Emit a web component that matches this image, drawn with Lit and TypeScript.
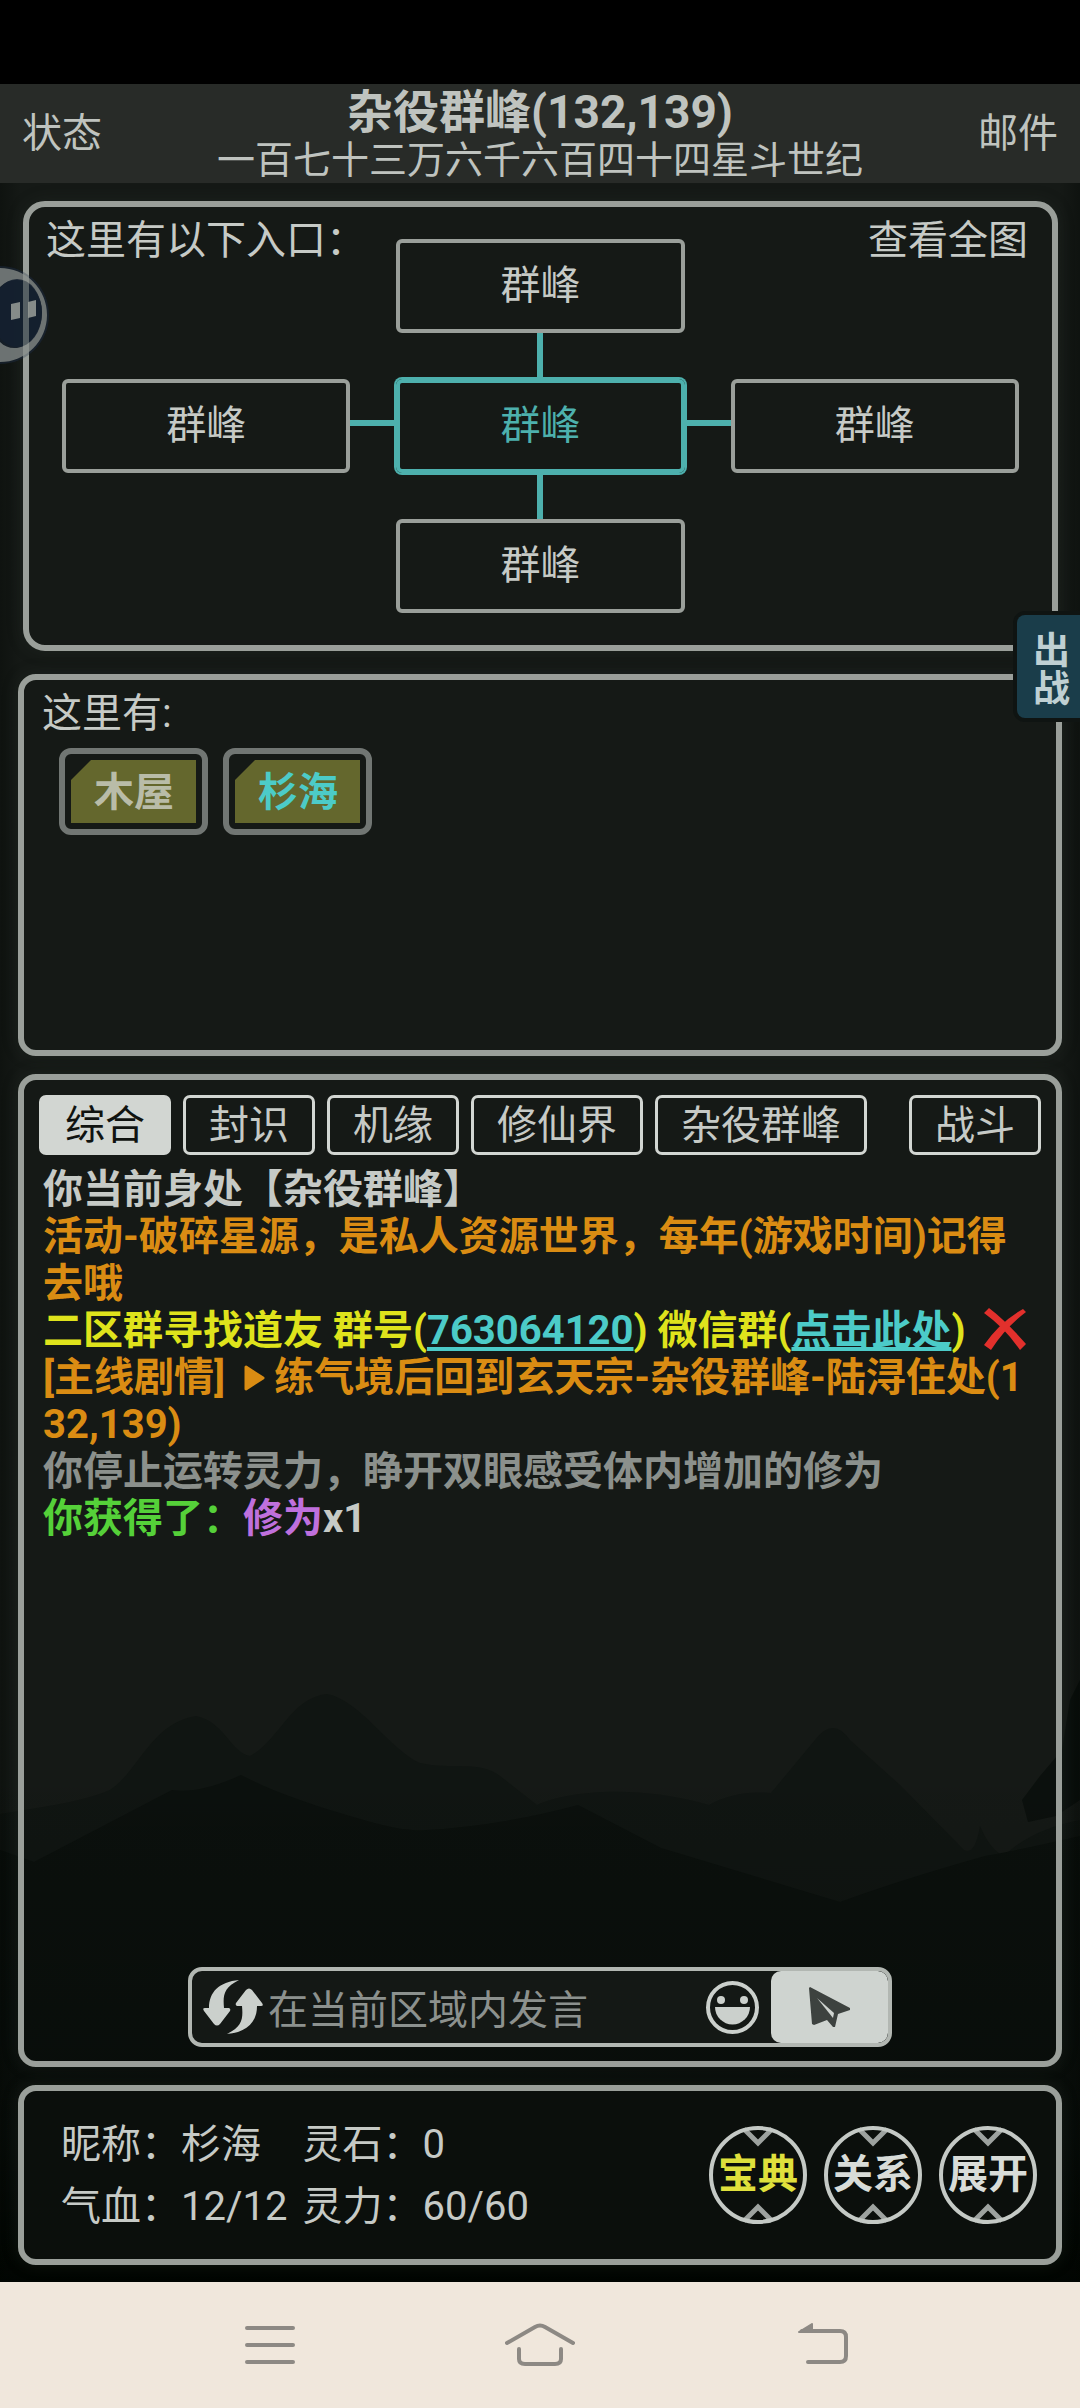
import { LitElement, html, css, svg } from "lit";
import { customElement, state } from "lit/decorators.js";

const chevrons = svg`
  <path d="M-14 -46 L0 -32 L14 -46" />
  <path d="M-14 46 L0 32 L14 46" />`;

@customElement("app-root")
export class AppRoot extends LitElement {
  @state() private channel = "综合";

  private channels = ["综合", "封识", "机缘", "修仙界", "杂役群峰", "战斗"];

  private stats = [
    { label: "昵称：", value: "杉海" },
    { label: "灵石：", value: "0" },
    { label: "气血：", value: "12/12" },
    { label: "灵力：", value: "60/60" },
  ];

  private actions = [
    { name: "宝典", hot: true },
    { name: "关系", hot: false },
    { name: "展开", hot: false },
  ];

  static styles = css`
    :host {
      display: flex;
      flex-direction: column;
      min-height: 100vh;
      position: relative;
      overflow: hidden;
      background: #151916;
      color: #c6cac6;
      font-family: Roboto, "Noto Sans CJK SC", sans-serif;
      font-size: 40px;
      line-height: 40px;
    }
    * {
      box-sizing: border-box;
    }
    button,
    input {
      font: inherit;
      color: inherit;
      background: none;
      border: 0;
      margin: 0;
      padding: 0;
    }
    svg {
      display: block;
    }
    h1,
    h2,
    p,
    dl,
    dt,
    dd {
      margin: 0;
      font: inherit;
    }

    .status-bar {
      height: 84px;
      background: #000;
    }
    .header {
      display: flex;
      align-items: center;
      justify-content: space-between;
      height: 99px;
      padding: 0 22px;
      background: #282b28;
      color: #bfc3bf;
    }
    .place {
      padding-top: 2px;
      text-align: center;
    }
    .place-name {
      font-size: 46px;
      font-weight: 700;
      line-height: 51px;
    }
    .era {
      font-size: 38px;
      line-height: 44px;
    }

    .main {
      position: relative;
      flex: 1;
      display: flex;
      flex-direction: column;
      gap: 18px;
      padding: 18px 18px 17px;
    }
    .scene {
      position: absolute;
      inset: 0;
      width: 100%;
      height: 100%;
    }
    .panel {
      position: relative;
      border: 6px solid #9a9f9a;
      border-radius: 18px;
      box-shadow: 0 0 16px rgba(48, 56, 50, 0.3);
    }

    .map {
      display: grid;
      margin: 0 4px 5px 5px;
      border-radius: 22px;
    }
    .map-head {
      grid-area: 1 / 1;
      align-self: start;
      display: flex;
      justify-content: space-between;
      padding: 14px 24px 0 17px;
    }
    .map-grid {
      grid-area: 1 / 1;
      display: grid;
      grid-template-columns: 1fr 46px 1fr 46px 1fr;
      grid-template-rows: 94px 46px 94px 46px 94px;
      padding: 32px 33px;
    }
    .node {
      border: 4px solid #9a9f9a;
      border-radius: 6px;
    }
    .node.here {
      border-color: #4db0ad;
      box-shadow: 0 0 0 2px #4db0ad;
      color: #4db0ad;
    }
    .north {
      grid-area: 1 / 3;
    }
    .west {
      grid-area: 3 / 1;
    }
    .here {
      grid-area: 3 / 3;
    }
    .east {
      grid-area: 3 / 5;
    }
    .south {
      grid-area: 5 / 3;
    }
    .road {
      background: #4db0ad;
    }
    .road-n,
    .road-s {
      width: 6px;
      justify-self: center;
    }
    .road-w,
    .road-e {
      height: 6px;
      align-self: center;
      margin-bottom: 6px;
    }
    .road-n {
      grid-area: 2 / 3;
    }
    .road-s {
      grid-area: 4 / 3;
    }
    .road-w {
      grid-area: 3 / 2;
    }
    .road-e {
      grid-area: 3 / 4;
    }

    .room {
      min-height: 382px;
      padding: 14px 18px;
    }
    .room-list {
      display: flex;
      gap: 15px;
      padding: 14px 17px 0;
    }
    .thing {
      padding: 6px;
      border: 6px solid #717673;
      border-radius: 12px;
      font-weight: 700;
    }
    .thing-face {
      display: block;
      padding: 13px 22px 10px 23px;
      background: #64672d;
      clip-path: polygon(20px 0, 100% 0, 100% 100%, 0 100%, 0 20px);
      color: #b9bca8;
    }
    .thing-face.self {
      color: #4ccbc8;
    }

    .log {
      flex: 1;
      display: flex;
      flex-direction: column;
      padding: 15px 15px 14px;
    }
    .tabs {
      display: flex;
      gap: 12px;
    }
    .tab {
      height: 60px;
      padding: 2px 23px 0;
      border: 3px solid #d2d6d2;
      border-radius: 7px;
    }
    .tab:last-child {
      margin-left: auto;
    }
    .tab.on {
      background: #d2d6d2;
      color: #101310;
    }
    .lines {
      flex: 1;
      padding: 11px 6px 0 4px;
      font-weight: 700;
      line-height: 47px;
      word-break: break-all;
    }
    .gold {
      color: #da8c13;
    }
    .yellow {
      color: #dfe31c;
    }
    .dim {
      color: #8b908c;
    }
    .green {
      color: #55d139;
    }
    .purple {
      color: #bf70dd;
    }
    .link {
      color: #4ccbc8;
      text-decoration: underline;
      text-decoration-thickness: 4px;
      text-underline-offset: 3px;
      text-decoration-skip-ink: none;
    }
    .inline-icon {
      display: inline-block;
    }
    .cross {
      margin-left: 9px;
      vertical-align: -6px;
    }
    .play {
      margin: 0 9px 0 19px;
    }

    .chat {
      display: flex;
      align-items: center;
      width: 100%;
      max-width: 704px;
      height: 80px;
      margin: 0 auto;
      border: 4px solid #b2b7b2;
      border-radius: 14px;
      background: #141815;
      overflow: hidden;
    }
    .refresh {
      padding: 0 5px 0 11px;
    }
    .say {
      flex: 1;
      min-width: 0;
      padding-top: 6px;
      outline: 0;
    }
    .say::placeholder {
      color: #8c918e;
      opacity: 1;
    }
    .emoji {
      padding-right: 12px;
    }
    .send {
      align-self: stretch;
      display: grid;
      place-items: center;
      width: 117px;
      border-radius: 10px;
      background: #cfd4d0;
    }

    .me {
      display: flex;
      align-items: center;
      justify-content: space-between;
      gap: 24px;
      min-height: 180px;
      padding: 0 18px 0 37px;
      background: #0b0f0c;
    }
    .stats {
      display: grid;
      grid-template-columns: auto auto;
      gap: 22px 15px;
      padding-top: 2px;
    }
    .stat {
      display: flex;
    }
    .actions {
      display: flex;
      gap: 15px;
    }
    .action {
      display: grid;
      place-items: center;
      width: 100px;
      height: 100px;
      color: #d8dcd8;
      font-weight: 700;
    }
    .action > * {
      grid-area: 1 / 1;
    }
    .action.hot {
      color: #dfe03c;
    }

    .nav {
      display: grid;
      grid-template-columns: 1fr 1fr 1fr;
      place-items: center;
      height: 126px;
      padding: 0 135px;
      background: #f0e7dc;
    }
    .nav-button {
      height: 44px;
    }

    .battle {
      position: absolute;
      top: 615px;
      right: 0;
      width: 63px;
      height: 103px;
      padding: 18px 10px 9px 16px;
      border-radius: 8px 0 0 8px;
      background: #1a3d4a;
      box-shadow: 0 0 0 4px #0f1412;
      color: #bfd0d3;
      font-size: 37px;
      font-weight: 700;
      line-height: 38px;
    }
    .pause {
      position: absolute;
      top: 264px;
      left: 0;
    }
  `;

  render() {
    return html`
      <div class="status-bar"></div>
      <header class="header">
        <button>状态</button>
        <div class="place">
          <h1 class="place-name">杂役群峰(132,139)</h1>
          <p class="era">一百七十三万六千六百四十四星斗世纪</p>
        </div>
        <button>邮件</button>
      </header>

      <main class="main">
        ${this.scene()}
        <section class="panel map">
          <div class="map-grid">
            <button class="node north">群峰</button>
            <span class="road road-n"></span>
            <button class="node west">群峰</button>
            <span class="road road-w"></span>
            <button class="node here">群峰</button>
            <span class="road road-e"></span>
            <button class="node east">群峰</button>
            <span class="road road-s"></span>
            <button class="node south">群峰</button>
          </div>
          <div class="map-head">
            <h2>这里有以下入口：</h2>
            <button>查看全图</button>
          </div>
        </section>

        <section class="panel room">
          <h2>这里有:</h2>
          <div class="room-list">
            <button class="thing"><span class="thing-face">木屋</span></button>
            <button class="thing"><span class="thing-face self">杉海</span></button>
          </div>
        </section>

        <section class="panel log">
          <nav class="tabs">
            ${this.channels.map(
              (name) => html`<button
                class="tab ${name === this.channel ? "on" : ""}"
                @click=${() => (this.channel = name)}
              >${name}</button>`
            )}
          </nav>
          <div class="lines">
            <p>你当前身处【杂役群峰】</p>
            <p class="gold">活动-破碎星源，是私人资源世界，每年(游戏时间)记得去哦</p>
            <p class="yellow">二区群寻找道友 群号(<a class="link" href="#group">763064120</a>) 微信群(<a class="link" href="#wechat">点击此处</a>) <svg
                class="inline-icon cross" width="42" height="42" viewBox="0 0 42 42" aria-hidden="true">
                <path d="M0 5 L5 0 Q22 13 42 36 L36 42 Q21 20 0 5Z" fill="#e2302c" />
                <path d="M39 1 L42 4 Q21 20 7 42 L0 37 Q16 14 39 1Z" fill="#e2302c" />
              </svg></p>
            <p class="gold">[主线剧情]<svg class="inline-icon play" width="21" height="26" viewBox="0 0 21 26" aria-hidden="true">
                <path d="M2 2 L19 13 L2 24Z" fill="#da8c13" stroke="#da8c13" stroke-width="3" stroke-linejoin="round" />
              </svg>练气境后回到玄天宗-杂役群峰-陆浔住处(132,139)</p>
            <p class="dim">你停止运转灵力，睁开双眼感受体内增加的修为</p>
            <p><span class="green">你获得了：</span><span class="purple">修为</span>x1</p>
          </div>
          <form class="chat" @submit=${(e: Event) => e.preventDefault()}>
            <button class="refresh" type="button" aria-label="刷新">
              <svg width="60" height="54" viewBox="0 0 60 54" fill="#cbd0cc">
                <path d="M36 0 C20 8 20 16 21 28 L26 28 Q28 29 27 31 L17 44 Q14 47 11 44 L1 31 Q-1 28 2 28 L6 28 C6 12 16 2 36 0Z" />
                <path d="M24 54 C40 46 40 38 39 26 L34 26 Q32 25 33 23 L43 10 Q46 7 49 10 L59 23 Q61 26 58 26 L54 26 C54 42 44 52 24 54Z" />
              </svg>
            </button>
            <input class="say" type="text" placeholder="在当前区域内发言" aria-label="在当前区域内发言" />
            <button class="emoji" type="button" aria-label="表情">
              <svg width="53" height="53" viewBox="0 0 53 53">
                <circle cx="26.500" cy="26.500" r="24.500" fill="none" stroke="#cbd0cc" stroke-width="4" />
                <circle cx="15" cy="19" r="4" fill="#cbd0cc" />
                <circle cx="38" cy="19" r="4" fill="#cbd0cc" />
                <path d="M9 26 H44 A17 17 0 0 1 9 26Z" fill="#cbd0cc" />
              </svg>
            </button>
            <button class="send" aria-label="发送">
              <svg width="42" height="42" viewBox="0 0 42 42">
                <path d="M1 1 L41 22 L41 24 L29 28 L26 41 L24 41 L18 34 L5 39 L3 38 L0 2Z" fill="#3d423f" />
                <path d="M8 12 L25 27 L24 32Z" fill="#cfd4d0" />
              </svg>
            </button>
          </form>
        </section>

        <section class="panel me">
          <dl class="stats">
            ${this.stats.map(
              (s) => html`<div class="stat"><dt>${s.label}</dt><dd>${s.value}</dd></div>`
            )}
          </dl>
          <div class="actions">
            ${this.actions.map(
              (a) => html`<button class="action ${a.hot ? "hot" : ""}">
                <svg width="100" height="100" viewBox="-50 -50 100 100" fill="none">
                  <g stroke="#9da29f" stroke-width="5">${chevrons}</g>
                  <circle r="47" stroke="#c4c9c5" stroke-width="4" />
                </svg>
                <span>${a.name}</span>
              </button>`
            )}
          </div>
        </section>
      </main>

      <nav class="nav">
        <button class="nav-button" aria-label="菜单">
          <svg width="50" height="44" viewBox="0 0 50 44" stroke="#8d8984" stroke-width="4" stroke-linecap="round">
            <path d="M2 5 H48 M2 22 H48 M2 39 H48" />
          </svg>
        </button>
        <button class="nav-button" aria-label="主页">
          <svg width="70" height="44" viewBox="0 0 70 44" fill="none" stroke="#8d8984" stroke-width="4" stroke-linecap="round">
            <path d="M2 20 L30 4 Q35 1 40 4 L68 20" />
            <path d="M14 26 V36 Q14 41 20 41 H50 Q56 41 56 36 V26" />
          </svg>
        </button>
        <button class="nav-button" aria-label="返回">
          <svg width="80" height="44" viewBox="0 0 80 44" fill="none" stroke="#8d8984" stroke-width="4" stroke-linecap="round">
            <path d="M32 8 H70 Q76 8 76 14 V33 Q76 39 70 39 H38" />
            <path d="M42 1 V9 H29Z" fill="#8d8984" stroke-width="2" stroke-linejoin="round" />
          </svg>
        </button>
      </nav>

      <button class="battle">出战</button>
      <button class="pause" aria-label="暂停">
        <svg width="52" height="102" viewBox="0 0 52 102">
          <circle cy="51" r="49" fill="#1b2a40" fill-opacity="0.5" />
          <path d="M0 4 A47 47 0 0 1 0 98 V78 C10 88 26 86 36 70 C44 56 44 40 36 28 C26 12 10 14 0 23Z"
            fill="#8a8f8b" fill-opacity="0.75" />
          <ellipse cx="17" cy="49" rx="25" ry="34" fill="#14202f" fill-opacity="0.85" />
          <path d="M11 40 L20 38 V54 L11 56Z M28 38 L36 36 V52 L28 54Z" fill="#858b89" />
          <path d="M23 6 H29 V94 H23Z" fill="#9a9f9a" fill-opacity="0.45" />
        </svg>
      </button>
    `;
  }

  /** Dusk landscape behind the panels. */
  private scene() {
    return html`<svg class="scene" viewBox="0 183 1080 2099" preserveAspectRatio="none" aria-hidden="true">
      <defs>
        <linearGradient id="dusk" x1="0" y1="0" x2="0" y2="1">
          <stop offset="0" stop-color="#000400" stop-opacity="0" />
          <stop offset="0.75" stop-color="#000400" stop-opacity="0" />
          <stop offset="0.93" stop-color="#000400" stop-opacity="0.25" />
          <stop offset="1" stop-color="#000400" stop-opacity="0.9" />
        </linearGradient>
        <linearGradient id="edge" x1="0" y1="0" x2="1" y2="0">
          <stop offset="0" stop-color="#000400" stop-opacity="0.3" />
          <stop offset="0.02" stop-color="#000400" stop-opacity="0" />
          <stop offset="0.98" stop-color="#000400" stop-opacity="0" />
          <stop offset="1" stop-color="#000400" stop-opacity="0.3" />
        </linearGradient>
      </defs>
      <path fill="#101512" d="M0 1814 C50 1806 80 1802 110 1790 C140 1770 150 1724 196 1716 C225 1722 230 1752 250 1756 C280 1740 290 1698 327 1694 C360 1700 390 1750 420 1763 C450 1770 480 1760 500 1776 L537 1805 C570 1790 640 1785 709 1805 Q735 1790 771 1793 L815 1740 Q833 1716 850 1740 L900 1785 L964 1850 Q975 1856 980 1826 Q990 1850 1004 1856 Q1030 1830 1080 1820 V2282 H0Z" />
      <path fill="#0b100d" d="M0 1850 L34 1862 L172 1790 Q200 1794 241 1775 C270 1790 300 1800 330 1810 C370 1822 400 1832 427 1830 Q500 1826 578 1805 L661 1848 L840 1902 Q900 1880 985 1856 Q1020 1850 1080 1836 V2282 H0Z" />
      <path fill="#0b100d" d="M1080 1680 L1070 1700 L1062 1750 L1040 1776 L1022 1800 L1028 1822 L1056 1816 L1080 1800Z" />
      <rect y="183" width="1080" height="2099" fill="url(#dusk)" />
      <rect y="183" width="1080" height="2099" fill="url(#edge)" />
    </svg>`;
  }
}
